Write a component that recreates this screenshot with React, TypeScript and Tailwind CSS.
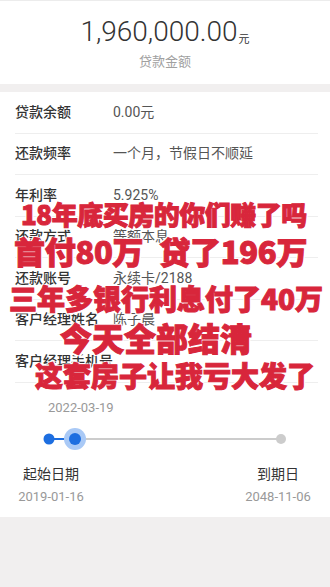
import React from "react";

const cjk = "font-['Roboto','Noto_Sans_CJK_SC',sans-serif]";

function Row({ label, value, last }: { label: string; value: string; last?: boolean }) {
  return (
    <div className={`flex h-[41.5px] items-center ${last ? "" : "border-b border-[#eeeeee]"}`}>
      <div className="w-[98px] whitespace-nowrap text-[14px] font-medium text-[#333333]">{label}</div>
      <div className="whitespace-nowrap text-[14px] text-[#555555]">{value}</div>
    </div>
  );
}

const outline =
  "[text-shadow:0_0_2px_#fff,1.5px_1.5px_0_#fff,-1.5px_-1.5px_0_#fff,1.5px_-1.5px_0_#fff,-1.5px_1.5px_0_#fff] [-webkit-text-stroke:1px_#d8263b]";

export default function App() {
  return (
    <div className={`relative h-[587px] w-[330px] overflow-hidden bg-[#f1efef] ${cjk}`}>
      <div className="h-[1px] bg-[#ececec]" />
      <div className="flex h-[83px] flex-col items-center bg-white pt-[17px]">
        <div className="flex items-end text-[#333333]">
          <span className="text-[28px] font-light leading-none">1,960,000.00</span>
          <span className="mb-[1px] ml-[1px] text-[11px] leading-none">元</span>
        </div>
        <div className="mt-[9px] text-[13px] leading-none text-[#a0a0a0]">贷款金额</div>
      </div>
      <div className="mt-[8px] bg-white">
        <div className="px-[15px] pr-[12px]">
          <Row label="贷款余额" value="0.00元" />
          <Row label="还款频率" value="一个月，节假日不顺延" />
          <Row label="年利率" value="5.925%" />
          <Row label="还款方式" value="等额本息" />
          <Row label="还款账号" value="永续卡/2188" />
          <Row label="客户经理姓名" value="陈子晨" />
          <Row label="客户经理手机号" value="" />
        </div>
        <div className="pt-[18px]">
          <div className="pl-[48px] text-[13px] leading-none text-[#999999]">2022-03-19</div>
          <svg width="330" height="30" className="mt-[10px] block">
            <line x1="49" y1="15" x2="281" y2="15" stroke="#cccccc" strokeWidth="2" />
            <line x1="49" y1="15" x2="75" y2="15" stroke="#1d6ee0" strokeWidth="2" />
            <circle cx="49" cy="15" r="5.5" fill="#1d6ee0" />
            <circle cx="75" cy="15" r="11" fill="#a9c9f6" />
            <circle cx="75" cy="15" r="6" fill="#1d6ee0" />
            <circle cx="281" cy="15" r="5" fill="#cccccc" />
          </svg>
          <div className="mt-[13px] flex justify-between pb-[14px] pl-[18px] pr-[19px]">
            <div className="flex w-[66px] flex-col items-center">
              <div className="whitespace-nowrap text-[14px] leading-none text-[#333333]">起始日期</div>
              <div className="mt-[9px] whitespace-nowrap text-[13px] leading-none text-[#999999]">2019-01-16</div>
            </div>
            <div className="flex w-[66px] flex-col items-center">
              <div className="whitespace-nowrap text-[14px] leading-none text-[#333333]">到期日</div>
              <div className="mt-[9px] whitespace-nowrap text-[13px] leading-none text-[#999999]">2048-11-06</div>
            </div>
          </div>
        </div>
      </div>

      <div className={`pointer-events-none absolute inset-0 font-black leading-none text-[#d8263b] ${outline} font-['Noto_Sans_CJK_SC',sans-serif]`}>
        <div className="absolute left-[21px] top-[201px] whitespace-nowrap text-[26px] tracking-[-0.5px]">18年底买房的你们赚了吗</div>
        <div className="absolute left-[14px] top-[235px] whitespace-nowrap text-[31px] tracking-[-0.3px]">
          首付80万<span className="inline-block w-[16px]" />贷了196万
        </div>
        <div className="absolute left-[9px] top-[284px] whitespace-nowrap text-[28px]">三年多银行利息付了40万</div>
        <div className="absolute left-[60px] top-[321px] whitespace-nowrap text-[32px]">今天全部结清</div>
        <div className="absolute left-[35px] top-[361px] whitespace-nowrap text-[28px]">这套房子让我亏大发了</div>
      </div>
    </div>
  );
}
